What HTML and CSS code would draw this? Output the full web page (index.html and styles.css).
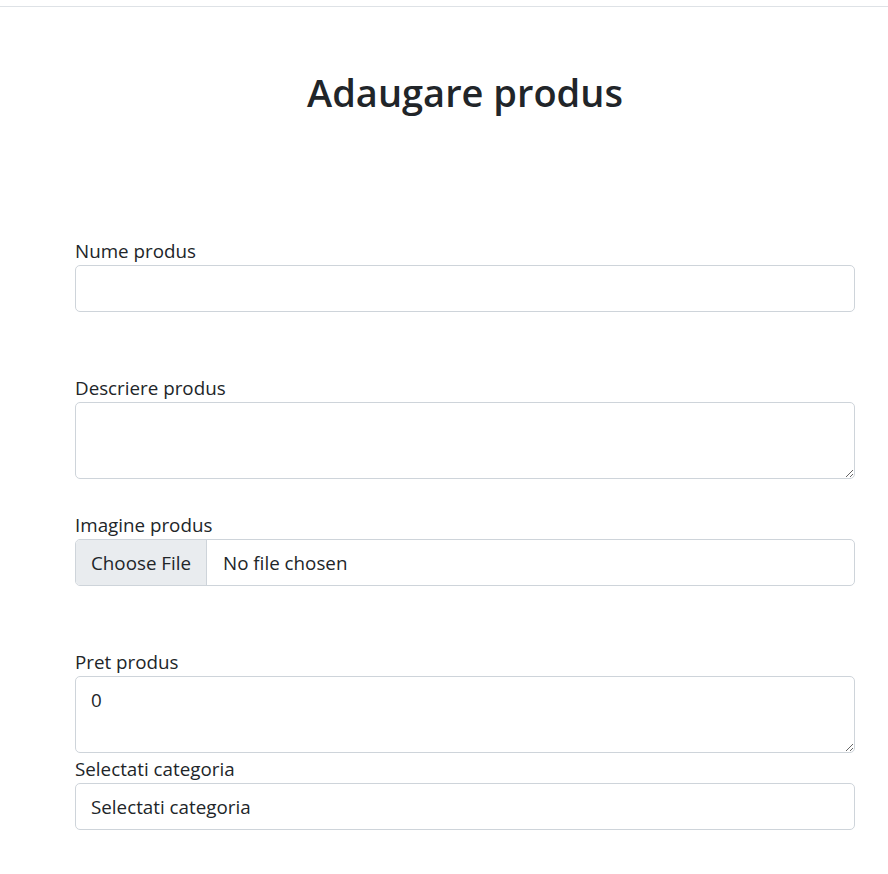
FILE: index.html
```html
<!DOCTYPE html>
<html lang="ro">
<head>
<meta charset="utf-8">
<title>Adaugare produs</title>
<link rel="stylesheet" href="styles.css">
</head>
<body>
<div class="topbar"></div>
<main class="page">
  <h1 class="title">Adaugare produs</h1>
  <form class="form">
    <div class="group g1">
      <label class="label" for="nume">Nume produs</label>
      <input class="control" id="nume" type="text">
    </div>
    <div class="group g2">
      <label class="label" for="descriere">Descriere produs</label>
      <textarea class="control area" id="descriere"></textarea>
    </div>
    <div class="group g3">
      <label class="label">Imagine produs</label>
      <div class="control file">
        <span class="file-btn">Choose File</span>
        <span class="file-name">No file chosen</span>
      </div>
    </div>
    <div class="group g4">
      <label class="label" for="pret">Pret produs</label>
      <textarea class="control area" id="pret">0</textarea>
    </div>
    <div class="group g5">
      <label class="label" for="cat">Selectati categoria</label>
      <select class="control select" id="cat">
        <option>Selectati categoria</option>
      </select>
    </div>
  </form>
</main>
</body>
</html>
```

FILE: styles.css
```css
html, body {
  margin: 0;
  padding: 0;
  background: #fff;
}
body {
  font-family: "Open Sans", "Noto Sans", sans-serif;
  font-size: 18.8px;
  color: #212529;
}
.topbar {
  height: 6px;
  border-bottom: 1px solid #dee2e6;
}
.page {
  padding: 0 33px 40px 75px;
}
.title {
  margin: 62px 0 0;
  font-size: 38px;
  font-weight: 600;
  line-height: 46px;
  text-align: center;
}
.form {
  display: flex;
  flex-direction: column;
}
.group {
  display: flex;
  flex-direction: column;
}
.g1 { margin-top: 122px; }
.g2 { margin-top: 62px; }
.g3 { margin-top: 32px; }
.g4 { margin-top: 62px; }
.g5 { margin-top: 2px; }
.label {
  display: block;
  line-height: 28px;
  height: 28px;
}
.control {
  box-sizing: border-box;
  width: 100%;
  height: 47px;
  margin: 0;
  padding: 7px 15px;
  font-family: inherit;
  font-size: 18.8px;
  line-height: 28px;
  color: #212529;
  background: #fff;
  border: 1px solid #ced4da;
  border-radius: 5px;
  outline: none;
}
.area {
  height: 77px;
  padding-top: 9px;
  resize: vertical;
  display: block;
}
.file {
  display: flex;
  align-items: stretch;
  padding: 0;
  overflow: hidden;
}
.file-btn {
  display: flex;
  align-items: center;
  padding: 0 15px;
  background: #e9ecef;
  border-right: 1px solid #ced4da;
}
.file-name {
  display: flex;
  align-items: center;
  padding-left: 16px;
}
.select {
  appearance: none;
  -webkit-appearance: none;
}
```
